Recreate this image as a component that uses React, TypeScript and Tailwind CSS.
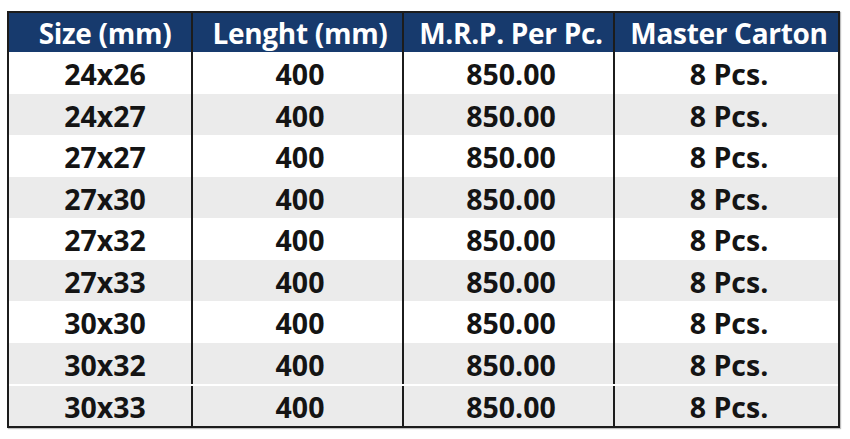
import React from "react";

const sizes = ["24x26", "24x27", "27x27", "27x30", "27x32", "27x33", "30x30", "30x32", "30x33"];
const shaded = [false, true, false, true, false, true, false, true, true];

const widths = [
  "w-[182px] pl-[10px]",
  "w-[211px] border-l-2 border-[#1c1c1c] pl-[5px]",
  "w-[211px] border-l-2 border-[#1c1c1c] pl-[5px]",
  "w-[225px] border-l-2 border-[#1c1c1c] pl-[5px]",
];

export default function App() {
  const headers = ["Size (mm)", "Lenght (mm)", "M.R.P. Per Pc.", "Master Carton"];
  return (
    <div className="w-[850px] h-[439px] bg-white pt-[11px] pl-[7px]" style={{ fontFamily: '"Open Sans", "Noto Sans", sans-serif' }}>
      <div className="w-[833px] border-2 border-[#1c1c1c] shadow-[1px_1px_1px_rgba(0,0,0,0.25)]">
        <div className="flex h-[39px] bg-[#173a6d] text-white font-bold text-[28px] leading-none">
          {headers.map((h, i) => (
            <div key={h} className={`${widths[i]} flex items-center justify-center`}>
              <span className="tracking-[-0.3px]">{h}</span>
            </div>
          ))}
        </div>
        {sizes.map((s, r) => {
          const cells = [s, "400", "850.00", "8 Pcs."];
          return (
            <div
              key={s}
              className={`flex h-[41.5px] font-bold text-[28.5px] leading-none text-[#141414] ${shaded[r] ? "bg-[#ebebeb]" : "bg-white"} ${r === 8 ? "border-t-2 border-white" : ""}`}
            >
              {cells.map((c, i) => (
                <div key={i} className={`${widths[i]} flex items-center justify-center pt-[3px]`}>
                  {c}
                </div>
              ))}
            </div>
          );
        })}
      </div>
    </div>
  );
}
